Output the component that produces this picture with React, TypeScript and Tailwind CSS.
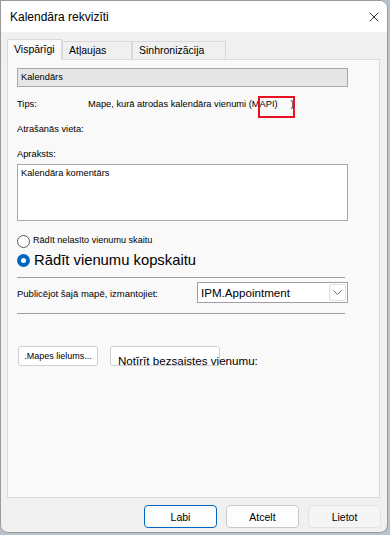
import { X } from "lucide-react";

const FONT = { fontFamily: '"Liberation Sans", Arial, sans-serif' };

function Tab({ label, active, width }: { label: string; active?: boolean; width: string }) {
    if (active) {
        return (
            <div className={`${width} h-[21px] bg-[#f9f9f9] border border-b-0 border-[#d9d9d9] flex items-center pl-[6px] text-[10.5px] text-black relative z-10 -mb-px`}>
                {label}
            </div>
        );
    }
    return (
        <div className={`${width} h-[18px] bg-[#f0f0f0] border border-b-0 border-[#d9d9d9] flex items-center pl-[6px] text-[10.5px] text-black`}>
            {label}
        </div>
    );
}

export default function App() {
    return (
        <div className="w-[390px] h-[535px] bg-[#b7c2cd]" style={FONT}>
            <div className="w-[388px] h-[533px] rounded-r-lg rounded-bl-lg border border-[#9a9a9a] bg-[#f0f0f0] overflow-hidden flex flex-col">
                {/* title bar */}
                <div className="h-[31px] bg-white flex items-center justify-between pl-[9px] pr-[5px]">
                    <span className="text-[12px] text-black">Kalendāra rekvizīti</span>
                    <X size={16} strokeWidth={1.2} className="text-black" />
                </div>

                <div className="px-[6px] pt-[6px] flex flex-col">
                    {/* tabs */}
                    <div className="flex items-end h-[21px]">
                        <Tab label="Vispārīgi" active width="w-[55px]" />
                        <Tab label="Atļaujas" width="w-[70px]" />
                        <Tab label="Sinhronizācija" width="w-[94px]" />
                    </div>

                    {/* panel */}
                    <div className="h-[439px] w-[373px] border border-[#dadada] bg-[#f9f9f9] pl-[9px] pt-[8px] relative">
                        <div className="w-[331px] h-[19px] bg-[#e6e6e6] border border-[#a8a8a8] flex items-center pl-[3px] text-[9.3px] text-black">
                            Kalendārs
                        </div>

                        <div className="mt-[10px] h-[16px] flex items-center text-[9.3px] text-black">
                            <span className="w-[71px]">Tips:</span>
                            <span>Mape, kurā atrodas kalendāra vienumi (MAPI)</span>
                            <span className="ml-[13px]">)</span>
                        </div>
                        <div className="absolute left-[250px] top-[36px] w-[37px] h-[22px] border-2 border-[#e81123]" />

                        <div className="mt-[9px] h-[16px] flex items-center text-[9.3px] text-black">Atrašanās vieta:</div>
                        <div className="mt-[9px] h-[16px] flex items-center text-[9.3px] text-black">Apraksts:</div>

                        <div className="mt-px w-[331px] h-[57px] bg-white border border-[#a8a8a8] pl-[3px] pt-[2px] text-[9.3px] text-black">
                            Kalendāra komentārs
                        </div>

                        {/* radios */}
                        <div className="mt-[12px] h-[16px] flex items-center gap-[3px] text-[9.1px] text-black">
                            <span className="w-[13px] h-[13px] rounded-full border border-[#5a5a5a] bg-white" />
                            <span>Rādīt nelasīto vienumu skaitu</span>
                        </div>
                        <div className="mt-px h-[20px] flex items-center gap-[4px] text-[14.8px] text-black">
                            <span className="w-[13px] h-[13px] rounded-full bg-[#0067c0] flex items-center justify-center">
                                <span className="w-[5px] h-[5px] rounded-full bg-white" />
                            </span>
                            <span>Rādīt vienumu kopskaitu</span>
                        </div>

                        <div className="mt-[7px] w-[328px] border-t border-[#a0a0a0]" />

                        <div className="mt-[4px] flex items-center">
                            <span className="w-[180px] text-[9.5px] text-black pt-[3px]">Publicējot šajā mapē, izmantojiet:</span>
                            <div className="w-[151px] h-[21px] bg-white border border-[#a0a0a0] flex items-center justify-between pl-[3px] pr-px">
                                <span className="text-[11.6px] text-black">IPM.Appointment</span>
                                <span className="w-[17px] h-[17px] border border-[#e0e0e0] rounded-[2px] flex items-center justify-center">
                                    <svg width="9" height="5" viewBox="0 0 9 5" fill="none">
                                        <path d="M0.5 0.5 L4.5 4.5 L8.5 0.5" stroke="#666" strokeWidth="1" />
                                    </svg>
                                </span>
                            </div>
                        </div>

                        <div className="mt-[10px] w-[328px] border-t border-[#a0a0a0]" />

                        <div className="mt-[32px] flex items-start">
                            <div className="w-[80px] h-[20px] ml-px bg-white border border-[#d0d0d0] rounded-[3px] flex items-center justify-center text-[9px] text-black pt-[2px]">
                                .Mapes lielums...
                            </div>
                            <div className="ml-[12px] w-[110px] h-[20px] bg-white border border-[#d0d0d0] rounded-[3px] relative">
                                <span className="absolute left-[7px] top-[5px] text-[11.6px] text-black whitespace-nowrap">Notīrīt bezsaistes vienumu:</span>
                            </div>
                        </div>
                    </div>

                    {/* bottom buttons */}
                    <div className="mt-[7px] flex justify-end gap-[9px]">
                        <div className="w-[73px] h-[23px] rounded-[4px] border-[1.5px] border-[#0067c0] bg-[#fdfdfd] flex items-center justify-center text-[10.5px] text-black pt-[2px]">
                            Labi
                        </div>
                        <div className="w-[73px] h-[23px] rounded-[4px] border border-[#c9c9c9] bg-[#fdfdfd] flex items-center justify-center text-[10.5px] text-black pt-[2px]">
                            Atcelt
                        </div>
                        <div className="w-[73px] h-[23px] rounded-[4px] border border-[#e3e3e3] bg-[#f5f5f5] flex items-center justify-center text-[10.5px] text-black pt-[2px]">
                            Lietot
                        </div>
                    </div>
                </div>
            </div>
        </div>
    );
}
